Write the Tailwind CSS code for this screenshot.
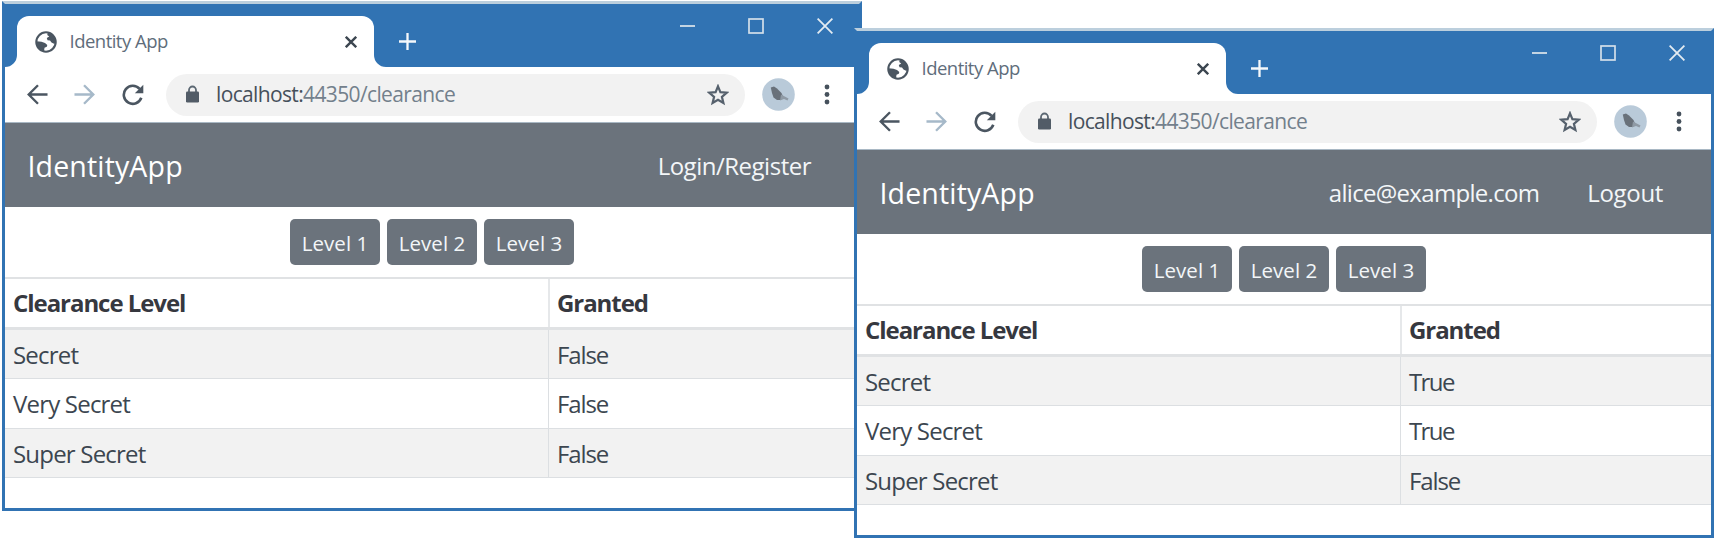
<!DOCTYPE html>
<html lang="en">
<head>
<meta charset="utf-8">
<title>Identity App</title>
<script src="https://cdn.jsdelivr.net/npm/@tailwindcss/browser@4"></script>
</head>
<body class="bg-white">
<svg class="hidden">
  <symbol id="globe" viewBox="0 0 22 22">
    <circle cx="11" cy="11" r="9.700" fill="#fff" stroke="#4b5661" stroke-width="2.100"/>
    <path fill="#4b5661" d="M13 1.500C17 2.500 20 6 20.500 10.500L19.500 13L16.500 11.500L15 9.500L12.500 9.300L11.800 7L14.200 5.500L12.200 4Z"/>
    <path fill="#4b5661" d="M1.500 10.300L6.500 10.800L10 12L12.300 14L11.800 15.800L9.500 16.800L9 20.300C5 19.500 1.500 15.500 1.500 10.300Z"/>
  </symbol>
  <symbol id="arrow" viewBox="0 0 22 22"><path d="M21.500 11H2M11.500 1.300L1.800 11l9.700 9.700" fill="none" stroke="currentColor" stroke-width="2.500"/></symbol>
  <symbol id="reload" viewBox="0 0 22 22"><path d="M19.300 13.800A9 9 0 1 1 17.600 4.900" fill="none" stroke="#4b5661" stroke-width="2.600"/><path d="M21.300 0.800V9.300H12.800Z" fill="#4b5661"/></symbol>
  <symbol id="lock" viewBox="0 0 13 18"><path d="M3 8V5a3.500 3.500 0 0 1 7 0V8" fill="none" stroke="#5c6873" stroke-width="1.800"/><rect y="6.500" width="13" height="11" rx="1.300" fill="#525c67"/></symbol>
  <symbol id="star" viewBox="0 0 22 22"><path d="M11 2.300L13.400 8.200L19.800 8.700L14.900 12.800L16.400 19L11 15.700L5.600 19L7.100 12.800L2.200 8.700L8.600 8.200Z" fill="none" stroke="#56616d" stroke-width="2.200"/></symbol>
  <symbol id="avatar" viewBox="0 0 33 33"><circle cx="16.500" cy="16.500" r="16.300" fill="#b9cad9"/><path d="M8.800 9.500L12 8.500L15 10.500L19.500 15L21 18.500L19 22L15 22L11.500 19.500L10 15Z" fill="#69717a"/><path d="M19 16.500L26.500 20.500L25.500 22.500L22 21L18 22.500Z" fill="#8f9aa5"/></symbol>
  <symbol id="dots" viewBox="0 0 6 21"><g fill="#46515c"><circle cx="3" cy="3" r="2.400"/><circle cx="3" cy="10.500" r="2.400"/><circle cx="3" cy="18" r="2.400"/></g></symbol>
</svg>

<main id="desktop" class="relative h-[540px] w-[1715px] overflow-hidden font-['Open_Sans','Noto_Sans',sans-serif] text-[#3c4650]"></main>

<script>
const table = rows => `
  <div class="flex h-[52.5px] border-b-[3px] border-t-2 border-[#e0e2e4] text-[24px] font-bold tracking-[-1.05px] text-[#36383f]">
    <div class="flex w-[543px] items-center pl-2 pt-px">Clearance Level</div>
    <div class="flex flex-1 items-center border-l-2 border-[#e6e8ea] pl-[7px] pt-px">Granted</div>
  </div>` + rows.map(([name, granted], i) => `
  <div class="flex h-[49.5px] border-b border-[#dcdfe2] text-[24px] tracking-[-0.8px] ${i % 2 ? 'bg-white' : 'bg-[#f2f2f2]'}">
    <div class="flex w-[543px] items-center pl-2 pt-[2px]">${name}</div>
    <div class="flex flex-1 items-center border-l border-[#dcdfe2] pl-2 pt-[2px] ${granted === 'True' ? 'tracking-[-1.6px]' : 'tracking-[-1.1px]'}">${granted}</div>
  </div>`).join('');

const browser = (place, links, rows) => `
<section class="absolute ${place} flex h-[510px] w-[860px] flex-col border-x-[3px] border-b-[3px] border-t-[3px] border-[#3173b3] border-t-[#bccfdd] bg-white">
  <header class="flex h-[63px] shrink-0 items-end bg-[#3173b3]">
    <svg class="size-3" viewBox="0 0 12 12"><path d="M12 0V12H0A12 12 0 0 0 12 0Z" fill="#fff"/></svg>
    <div class="flex h-[51px] w-[357px] items-center rounded-t-[12px] bg-white pl-[18px] pr-[17px]">
      <svg class="size-[22px]"><use href="#globe"/></svg>
      <span class="ml-[12.5px] flex-1 text-[18.5px] leading-none tracking-[-0.52px] text-[#5f6d7b]">Identity App</span>
      <svg class="size-3" viewBox="0 0 12 12"><path d="M.8 .8L11.200 11.200M11.200 .8L.8 11.200" stroke="#3c4650" stroke-width="2.400"/></svg>
    </div>
    <svg class="size-3" viewBox="0 0 12 12"><path d="M0 0V12H12A12 12 0 0 1 0 0Z" fill="#fff"/></svg>
    <svg class="mb-[17px] ml-[13px] size-[17px]" viewBox="0 0 17 17"><path d="M8.500 0V17M0 8.500H17" stroke="#f4f8fb" stroke-width="2.300"/></svg>
    <div class="ml-auto mr-[26.5px] flex h-full gap-[53px] pt-[13.5px]">
      <svg class="h-4 w-[15px]" viewBox="0 0 15 16"><path d="M0 8H15" stroke="#c3d4e3" stroke-width="2"/></svg>
      <svg class="size-4" viewBox="0 0 16 16"><rect x="1" y="1" width="14" height="14" fill="none" stroke="#d3dfe9" stroke-width="1.700"/></svg>
      <svg class="size-4" viewBox="0 0 16 16"><path d="M.6 .6L15.400 15.400M15.400 .6L.6 15.400" stroke="#e3ebf2" stroke-width="1.800"/></svg>
    </div>
  </header>
  <div class="flex h-[56px] shrink-0 items-center border-b border-[#a9b8c4] pl-[21.5px]">
    <svg class="size-[21px] text-[#4b5661]"><use href="#arrow"/></svg>
    <svg class="ml-[26px] size-[21px] rotate-180 text-[#a6b9c9]"><use href="#arrow"/></svg>
    <svg class="ml-[27px] size-[22px]"><use href="#reload"/></svg>
    <div class="ml-[22px] flex h-[42px] w-[579px] items-center rounded-full bg-[#f2f2f2] pl-5 pr-4">
      <svg class="mb-[2px] h-[18px] w-[13px]"><use href="#lock"/></svg>
      <span class="ml-[17.5px] flex-1 text-[21px] leading-none tracking-[-0.64px] text-[#73808c]"><span class="text-[#46505b]">localhost:</span>44350/clearance</span>
      <svg class="size-[22px]"><use href="#star"/></svg>
    </div>
    <svg class="ml-[17px] size-[33px]"><use href="#avatar"/></svg>
    <svg class="ml-[29.5px] h-[21px] w-[6px]"><use href="#dots"/></svg>
  </div>
  <nav class="flex h-[84px] shrink-0 items-center justify-between bg-[#6b737c] pl-[22.5px] pr-[48px] text-[24px] text-[#f3f6f8]">
    <span class="pt-[2px] text-[28.5px] leading-none tracking-[0.15px] text-white">IdentityApp</span>
    <div class="flex gap-[48px] pt-px leading-none">${links}</div>
  </nav>
  <div class="flex h-[70px] shrink-0 items-center justify-center gap-[6.5px] text-[20.5px] text-[#f3f6f8]">
    ${[1, 2, 3].map(n => `<button class="h-[46px] w-[90.5px] rounded-[5px] bg-[#6b737c] pt-[2px] tracking-[0.05px]">Level ${n}</button>`).join('')}
  </div>
  ${table(rows)}
</section>`;

document.getElementById('desktop').innerHTML =
  browser('left-[2px] top-[1px]', '<a class="tracking-[-0.49px]">Login/Register</a>',
    [['Secret', 'False'], ['Very Secret', 'False'], ['Super Secret', 'False']]) +
  browser('left-[854px] top-[28px]', '<a class="tracking-[-0.69px]">alice@example.com</a><a class="tracking-[-0.33px]">Logout</a>',
    [['Secret', 'True'], ['Very Secret', 'True'], ['Super Secret', 'False']]);
</script>
</body>
</html>
